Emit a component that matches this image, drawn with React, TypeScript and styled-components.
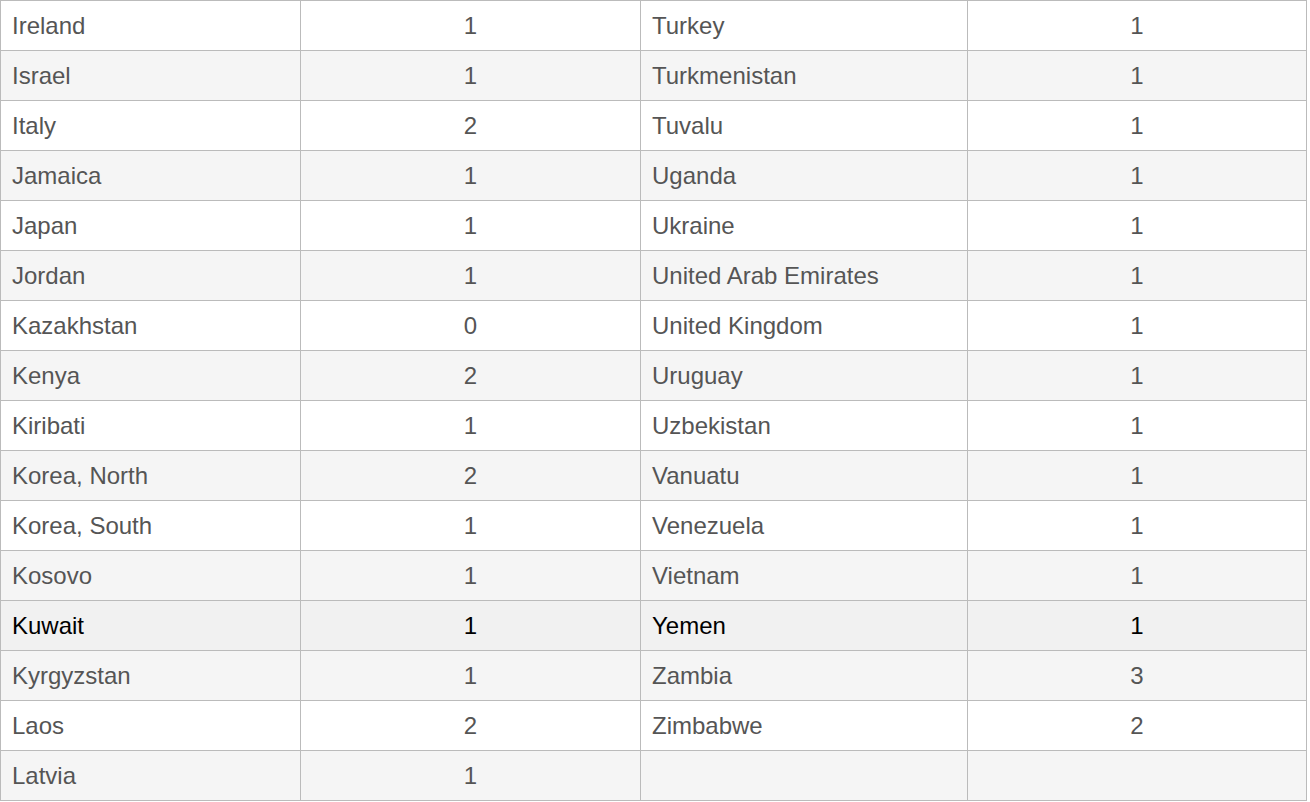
import styled, { createGlobalStyle } from "styled-components";

const GlobalStyle = createGlobalStyle`
  html, body {
    margin: 0;
    padding: 0;
    background: #ffffff;
  }
`;

const Table = styled.table`
  width: 1307px;
  border-collapse: collapse;
  table-layout: fixed;
  font-family: "Liberation Sans", Arial, sans-serif;
  font-size: 24px;
  color: #555555;
`;

const Col = styled.col<{ $w: number }>`
  width: ${(p) => p.$w}px;
`;

const Row = styled.tr<{ $striped: boolean; $active?: boolean }>`
  height: 50px;
  background: ${(p) =>
    p.$active ? "#f1f1f1" : p.$striped ? "#f5f5f5" : "#ffffff"};
  color: ${(p) => (p.$active ? "#000000" : "inherit")};
`;

const NameCell = styled.td`
  border: 1px solid #bbbbbb;
  padding: 0 11px;
  text-align: left;
  white-space: nowrap;
`;

const CountCell = styled.td`
  border: 1px solid #bbbbbb;
  padding: 0;
  text-align: center;
`;

type Entry = [string, number];

const left: Entry[] = [
  ["Ireland", 1],
  ["Israel", 1],
  ["Italy", 2],
  ["Jamaica", 1],
  ["Japan", 1],
  ["Jordan", 1],
  ["Kazakhstan", 0],
  ["Kenya", 2],
  ["Kiribati", 1],
  ["Korea, North", 2],
  ["Korea, South", 1],
  ["Kosovo", 1],
  ["Kuwait", 1],
  ["Kyrgyzstan", 1],
  ["Laos", 2],
  ["Latvia", 1],
];

const right: Entry[] = [
  ["Turkey", 1],
  ["Turkmenistan", 1],
  ["Tuvalu", 1],
  ["Uganda", 1],
  ["Ukraine", 1],
  ["United Arab Emirates", 1],
  ["United Kingdom", 1],
  ["Uruguay", 1],
  ["Uzbekistan", 1],
  ["Vanuatu", 1],
  ["Venezuela", 1],
  ["Vietnam", 1],
  ["Yemen", 1],
  ["Zambia", 3],
  ["Zimbabwe", 2],
];

const colWidths = [300, 340, 327, 339];

function App() {
  return (
    <>
      <GlobalStyle />
      <Table>
        <colgroup>
          {colWidths.map((w, i) => (
            <Col key={i} $w={w} />
          ))}
        </colgroup>
        <tbody>
          {left.map((l, i) => {
            const r = right[i];
            return (
              <Row key={l[0]} $striped={i % 2 === 1} $active={i === 12}>
                <NameCell>{l[0]}</NameCell>
                <CountCell>{l[1]}</CountCell>
                <NameCell>{r ? r[0] : ""}</NameCell>
                <CountCell>{r ? r[1] : ""}</CountCell>
              </Row>
            );
          })}
        </tbody>
      </Table>
    </>
  );
}

export default App;
